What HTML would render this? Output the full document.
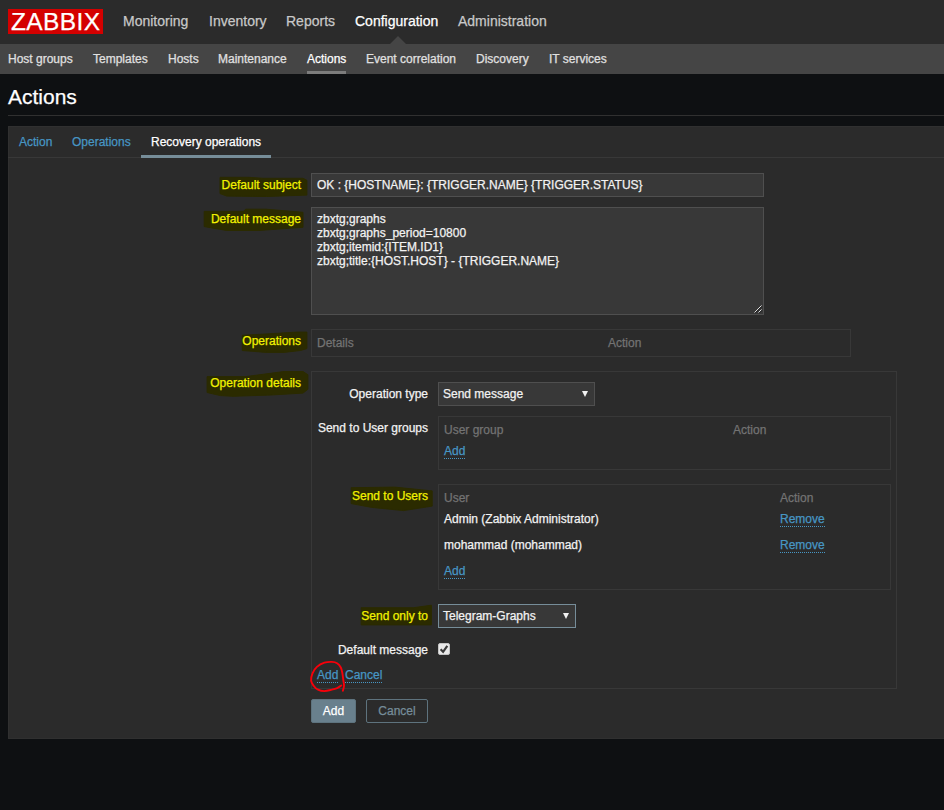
<!DOCTYPE html>
<html>
<head>
<meta charset="utf-8">
<title>Configuration of actions</title>
<style>
*{box-sizing:border-box;margin:0;padding:0}
html,body{width:944px;height:810px;overflow:hidden}
body{background:#0e1012;color:#f2f2f2;font-family:"Liberation Sans",Arial,sans-serif;font-size:12px;line-height:14px;position:relative;-webkit-text-stroke:0.25px}
a{text-decoration:none;color:#4796c4}
.abs{position:absolute;white-space:nowrap}
#topnav{position:absolute;left:0;top:0;width:944px;height:44px;background:#2b2b2b}
#logo{position:absolute;left:8px;top:9px;width:95px;height:25px;background:#d40000;color:#fff;overflow:hidden}
#logo span{position:absolute;left:3px;top:-1px;font-size:24.5px;line-height:28px;letter-spacing:0.4px;white-space:nowrap}
#topnav a{position:absolute;top:12px;font-size:14px;line-height:18px;color:#c8c8c8;white-space:nowrap}
#topnav a.sel{color:#fff}
#tri{position:absolute;left:389.5px;top:36px;width:0;height:0;border-left:8px solid transparent;border-right:8px solid transparent;border-bottom:8px solid #454545}
#subnav{position:absolute;left:0;top:44px;width:944px;height:30px;background:#454545}
#subnav a{position:absolute;top:7px;font-size:12px;line-height:16px;color:#e0e0e0;white-space:nowrap}
#subnav a.sel{color:#fff}
#subnav .ul{position:absolute;left:307px;top:27px;width:39px;height:3px;background:#7c7c7c}
h1{position:absolute;left:8px;top:84px;font-size:21px;line-height:26px;font-weight:normal;color:#fff}
#hline{position:absolute;left:8px;top:115px;width:936px;height:1px;background:#303030}
#form{position:absolute;left:8px;top:126px;width:960px;height:613px;background:#2b2b2b;border:1px solid #303030}
#tabline{position:absolute;left:8px;top:157px;width:936px;height:1px;background:#383838}
.tab{position:absolute;top:134px;font-size:12px;line-height:16px;white-space:nowrap}
#tabsel{position:absolute;left:141px;top:155px;width:130px;height:3px;background:#768d99}
.lbl{position:absolute;text-align:right;white-space:nowrap;color:#f2f2f2;line-height:14px}
.hl{color:#f2f200}
.inp{position:absolute;background:#383838;border:1px solid #4f4f4f;color:#f2f2f2;padding:4px 5px;white-space:pre;line-height:14px}
.box{position:absolute;border:1px solid #383838}
.grey{color:#737373}
.dot{border-bottom:1px dotted #4796c4}
.dd{position:absolute;background:#383838;border:1px solid #4f4f4f;color:#f2f2f2;line-height:14px;padding:4px 4px}
.dd i{position:absolute;right:6px;top:8px;width:0;height:0;border-left:3.5px solid transparent;border-right:3.5px solid transparent;border-top:6px solid #f2f2f2}
.btn{position:absolute;top:699px;height:24px;line-height:22px;text-align:center;border:1px solid #5e737e;border-radius:2px}
</style>
</head>
<body>
<div id="topnav">
  <div id="logo"><span>ZABBIX</span></div>
  <a style="left:123px">Monitoring</a>
  <a style="left:209px">Inventory</a>
  <a style="left:286px">Reports</a>
  <a class="sel" style="left:355px">Configuration</a>
  <a style="left:458px">Administration</a>
  <div id="tri"></div>
</div>
<div id="subnav">
  <a style="left:8px">Host groups</a>
  <a style="left:93px">Templates</a>
  <a style="left:168px">Hosts</a>
  <a style="left:218px">Maintenance</a>
  <a class="sel" style="left:307px">Actions</a>
  <a style="left:366px">Event correlation</a>
  <a style="left:476px">Discovery</a>
  <a style="left:549px">IT services</a>
  <div class="ul"></div>
</div>
<h1>Actions</h1>
<div id="hline"></div>
<div id="form"></div>
<div id="tabline"></div>
<a class="tab" style="left:19px">Action</a>
<a class="tab" style="left:72px">Operations</a>
<span class="tab" style="left:151px;color:#fff">Recovery operations</span>
<div id="tabsel"></div>

<!-- highlighter marks -->
<svg class="abs" style="left:0;top:0" width="944" height="810" viewBox="0 0 944 810">
<g fill="#2b2b00" stroke="#2b2b00" stroke-width="1" stroke-linejoin="round">
<polygon points="220,177.3 248.4,177.3 263.6,178.3 303,178.3 306.9,180.3 306.9,195.1 266.2,196.5 226.8,196.1 220,193.6"/>
<polygon points="204.2,211.4 243.3,211.4 245.8,209.2 266.2,209.2 303,212.3 303,227.3 258.6,230.5 226.8,230.5 204.2,226.6"/>
<polygon points="242.3,335.3 277.6,333.3 296.7,332.1 306.9,332.1 306.9,348.6 300.5,350.5 284,352.4 266.2,352.4 242.3,350.5"/>
<polygon points="207.1,376.6 245.8,376.6 284,371.5 303,371.5 307.9,374.7 307.9,389.3 303,393.1 271.3,395 233.1,396.3 220.4,395.6 207.1,392.5"/>
<polygon points="351.2,487.7 394.7,487.1 432.2,490.9 432.2,506.1 403.6,510.6 371.8,507.4 351.2,503.6"/>
<polygon points="361.2,607.7 413.6,607.7 431.4,605.2 431.4,624.9 361.2,624.9"/>
</g>
</svg>

<div class="lbl hl" style="left:101px;width:200px;top:178px">Default subject</div>
<div class="inp" style="left:311px;top:173px;width:453px;height:24px">OK : {HOSTNAME}: {TRIGGER.NAME} {TRIGGER.STATUS}</div>

<div class="lbl hl" style="left:101px;width:200px;top:212px">Default message</div>
<div class="inp" style="left:311px;top:207px;width:453px;height:108px">zbxtg;graphs
zbxtg;graphs_period=10800
zbxtg;itemid:{ITEM.ID1}
zbxtg;title:{HOST.HOST} - {TRIGGER.NAME}<svg style="position:absolute;right:1px;bottom:1px" width="8" height="8" viewBox="0 0 8 8"><path d="M0.5 7.5L7.5 0.5M4.5 7.5L7.5 4.5" stroke="#e0e0e0" stroke-width="1" fill="none"/><path d="M1.5 7.8L7.8 1.5M5.5 7.8L7.8 5.5" stroke="#1a1a1a" stroke-width="0.8" fill="none"/></svg></div>

<div class="lbl hl" style="left:101px;width:200px;top:334px">Operations</div>
<div class="box" style="left:311px;top:329px;width:540px;height:28px"></div>
<div class="abs grey" style="left:317px;top:336px">Details</div>
<div class="abs grey" style="left:608px;top:336px">Action</div>

<div class="lbl hl" style="left:101px;width:200px;top:376px">Operation details</div>
<div class="box" style="left:311px;top:371px;width:586px;height:318px"></div>

<div class="lbl" style="left:228px;width:200px;top:387px">Operation type</div>
<div class="dd" style="left:438px;top:382px;width:157px;height:24px">Send message<i></i></div>

<div class="lbl" style="left:228px;width:200px;top:421px">Send to User groups</div>
<div class="box" style="left:438px;top:416px;width:453px;height:54px"></div>
<div class="abs grey" style="left:444px;top:423px">User group</div>
<div class="abs grey" style="left:733px;top:423px">Action</div>
<a class="abs dot" style="left:444px;top:444px">Add</a>

<div class="lbl hl" style="left:228px;width:200px;top:489px">Send to Users</div>
<div class="box" style="left:438px;top:484px;width:453px;height:106px"></div>
<div class="abs grey" style="left:444px;top:491px">User</div>
<div class="abs grey" style="left:780px;top:491px">Action</div>
<div class="abs" style="left:444px;top:512px">Admin (Zabbix Administrator)</div>
<a class="abs dot" style="left:780px;top:512px">Remove</a>
<div class="abs" style="left:444px;top:538px">mohammad (mohammad)</div>
<a class="abs dot" style="left:780px;top:538px">Remove</a>
<a class="abs dot" style="left:444px;top:564px">Add</a>

<div class="lbl hl" style="left:228px;width:200px;top:609px">Send only to</div>
<div class="dd" style="left:438px;top:604px;width:138px;height:24px;border-color:#768d99">Telegram-Graphs<i></i></div>

<div class="lbl" style="left:228px;width:200px;top:643px">Default message</div>
<svg class="abs" style="left:438px;top:643px" width="12" height="12" viewBox="0 0 12 12"><rect x="0.5" y="0.5" width="11" height="11" rx="1.5" fill="#e9e9e9" stroke="#c4c4c4"/><path d="M2.6 6.3L5.1 8.8L9.3 2.9" stroke="#3a3a3a" stroke-width="2.2" fill="none"/></svg>

<a class="abs dot" style="left:317px;top:668px">Add</a>
<a class="abs dot" style="left:345px;top:668px">Cancel</a>
<svg class="abs" style="left:0;top:0" width="944" height="810" viewBox="0 0 944 810"><path d="M341.3 685.5C340.6 685.9 338.7 687.4 337.1 688.1C335.5 688.8 333.9 689.2 331.8 689.7C329.7 690.2 326.7 691.1 324.4 691.1C322.1 691.1 319.8 690.6 318.0 689.7C316.2 688.9 314.9 687.5 313.8 686.0C312.7 684.5 311.3 682.8 311.1 680.7C310.9 678.6 311.5 675.6 312.5 673.3C313.5 671.0 314.9 668.7 316.9 666.9C318.9 665.1 321.9 663.5 324.4 662.7C326.9 661.9 329.7 661.8 331.8 661.9C333.9 662.0 335.6 662.3 337.1 663.2C338.6 664.1 339.9 665.8 340.8 667.5C341.7 669.2 342.0 671.1 342.4 673.3C342.8 675.5 343.1 678.6 343.4 680.7C343.7 682.8 344.1 684.3 344.0 686.0C343.9 687.7 343.1 690.0 342.9 690.8" stroke="#f8000a" stroke-width="1.9" fill="none" stroke-linecap="round" stroke-linejoin="round"/></svg>

<div class="btn" style="left:311px;width:45px;background:#69808d;color:#fff">Add</div>
<div class="btn" style="left:366px;width:62px;color:#768d99">Cancel</div>
</body>
</html>
